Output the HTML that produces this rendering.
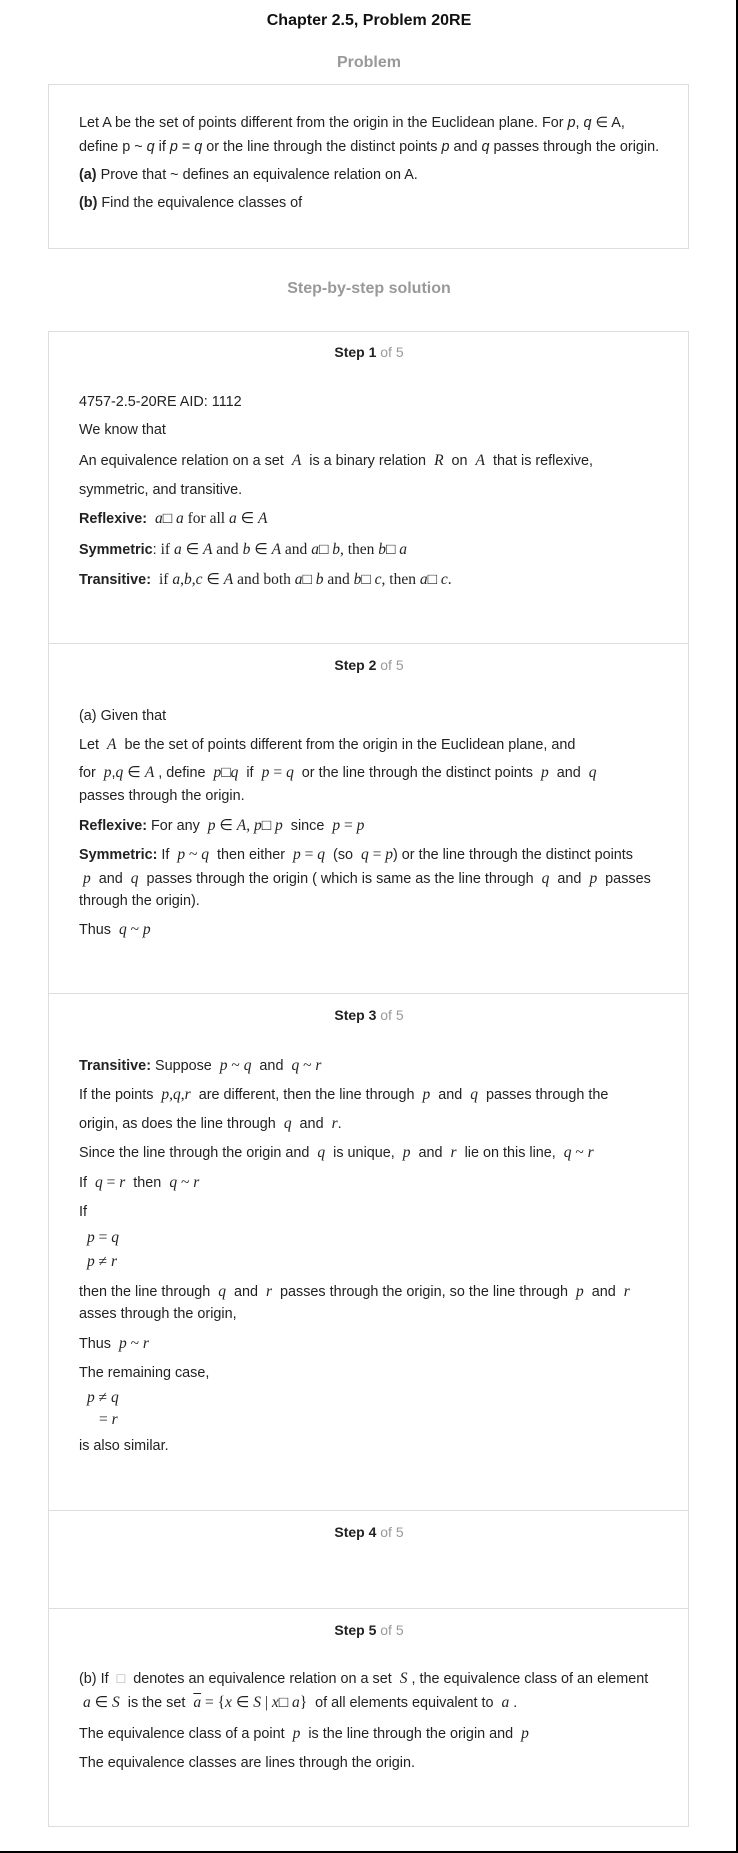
<!DOCTYPE html>
<html><head><meta charset="utf-8"><style>
*{margin:0;padding:0;box-sizing:border-box}
body{width:738px;height:1853px;background:#fff;font-family:"Liberation Sans",sans-serif;color:#222;position:relative;overflow:hidden;border-right:2px solid #000;border-bottom:2px solid #000}
.t{position:absolute;left:79px;font-size:14.4px;white-space:nowrap;line-height:16px;transform:translateY(-8px)}
.c{position:absolute;left:0;width:738px;text-align:center;white-space:nowrap;font-weight:bold;transform:translateY(-9px);line-height:18px}
.box{position:absolute;left:48px;width:641px;border:1px solid #ddd}
.hr{position:absolute;left:48px;width:641px;border-top:1px solid #ddd}
i.m{font-family:"Liberation Serif",serif;font-size:15.5px}
.r{font-family:"Liberation Serif",serif;font-size:15.5px}
b{font-weight:bold}
.g{color:#999;font-weight:normal}
</style></head><body>
<div class="c" style="top:21px;font-size:16px;color:#111">Chapter 2.5, Problem 20RE</div>
<div class="c" style="top:63px;font-size:16px;color:#999">Problem</div>
<div class="box" style="top:84px;height:165px"></div>
<div class="t" style="top:123px">Let A be the set of points different from the origin in the Euclidean plane. For <i>p</i>, <i>q</i> ∈ A,</div>
<div class="t" style="top:147px">define p ~ <i>q</i> if <i>p</i> = <i>q</i> or the line through the distinct points <i>p</i> and <i>q</i> passes through the origin.</div>
<div class="t" style="top:175px"><b>(a)</b> Prove that ~ defines an equivalence relation on A.</div>
<div class="t" style="top:203px"><b>(b)</b> Find the equivalence classes of</div>
<div class="c" style="top:289px;font-size:16px;color:#999">Step-by-step solution</div>
<div class="box" style="top:331px;height:1496px"></div>
<div class="hr" style="top:643px"></div>
<div class="hr" style="top:993px"></div>
<div class="hr" style="top:1510px"></div>
<div class="hr" style="top:1608px"></div>

<div class="c" style="top:352px;font-size:14px">Step 1 <span class="g">of 5</span></div>
<div class="t" style="top:402px">4757-2.5-20RE AID: 1112</div>
<div class="t" style="top:430px">We know that</div>
<div class="t" style="top:461px">An equivalence relation on a set &nbsp;<i class="m">A</i>&nbsp; is a binary relation &nbsp;<i class="m">R</i>&nbsp; on &nbsp;<i class="m">A</i>&nbsp; that is reflexive,</div>
<div class="t" style="top:490px">symmetric, and transitive.</div>
<div class="t" style="top:519px"><b>Reflexive:</b> &nbsp;<span class="r"><i>a</i>□ <i>a</i> for all <i>a</i> ∈ <i>A</i></span></div>
<div class="t" style="top:550px"><b>Symmetric</b>: <span class="r">if <i>a</i> ∈ <i>A</i> and <i>b</i> ∈ <i>A</i> and <i>a</i>□ <i>b</i>, then <i>b</i>□ <i>a</i></span></div>
<div class="t" style="top:580px"><b>Transitive:</b> &nbsp;<span class="r">if <i>a</i>,<i>b</i>,<i>c</i> ∈ <i>A</i> and both <i>a</i>□ <i>b</i> and <i>b</i>□ <i>c</i>, then <i>a</i>□ <i>c</i>.</span></div>

<div class="c" style="top:665px;font-size:14px">Step 2 <span class="g">of 5</span></div>
<div class="t" style="top:716px">(a) Given that</div>
<div class="t" style="top:745px">Let &nbsp;<i class="m">A</i>&nbsp; be the set of points different from the origin in the Euclidean plane, and</div>
<div class="t" style="top:773px">for &nbsp;<i class="m">p</i>,<i class="m">q</i> <span class="r">∈</span> <i class="m">A</i> , define &nbsp;<i class="m">p</i><span class="r">□</span><i class="m">q</i>&nbsp; if &nbsp;<i class="m">p</i> <span class="r">=</span> <i class="m">q</i>&nbsp; or the line through the distinct points &nbsp;<i class="m">p</i>&nbsp; and &nbsp;<i class="m">q</i></div>
<div class="t" style="top:796px">passes through the origin.</div>
<div class="t" style="top:826px"><b>Reflexive:</b> For any &nbsp;<span class="r"><i>p</i> ∈ <i>A</i>, <i>p</i>□ <i>p</i></span>&nbsp; since &nbsp;<span class="r"><i>p</i> = <i>p</i></span></div>
<div class="t" style="top:855px"><b>Symmetric:</b> If &nbsp;<span class="r"><i>p</i> ~ <i>q</i></span>&nbsp; then either &nbsp;<span class="r"><i>p</i> = <i>q</i></span>&nbsp; (so &nbsp;<span class="r"><i>q</i> = <i>p</i></span>) or the line through the distinct points</div>
<div class="t" style="top:879px">&nbsp;<i class="m">p</i>&nbsp; and &nbsp;<i class="m">q</i>&nbsp; passes through the origin ( which is same as the line through &nbsp;<i class="m">q</i>&nbsp; and &nbsp;<i class="m">p</i>&nbsp; passes</div>
<div class="t" style="top:901px">through the origin).</div>
<div class="t" style="top:930px">Thus &nbsp;<span class="r"><i>q</i> ~ <i>p</i></span></div>

<div class="c" style="top:1015px;font-size:14px">Step 3 <span class="g">of 5</span></div>
<div class="t" style="top:1066px"><b>Transitive:</b> Suppose &nbsp;<span class="r"><i>p</i> ~ <i>q</i></span>&nbsp; and &nbsp;<span class="r"><i>q</i> ~ <i>r</i></span></div>
<div class="t" style="top:1095px">If the points &nbsp;<span class="r"><i>p</i>,<i>q</i>,<i>r</i></span>&nbsp; are different, then the line through &nbsp;<i class="m">p</i>&nbsp; and &nbsp;<i class="m">q</i>&nbsp; passes through the</div>
<div class="t" style="top:1124px">origin, as does the line through &nbsp;<i class="m">q</i>&nbsp; and &nbsp;<i class="m">r</i>.</div>
<div class="t" style="top:1153px">Since the line through the origin and &nbsp;<i class="m">q</i>&nbsp; is unique, &nbsp;<i class="m">p</i>&nbsp; and &nbsp;<i class="m">r</i>&nbsp; lie on this line, &nbsp;<span class="r"><i>q</i> ~ <i>r</i></span></div>
<div class="t" style="top:1183px">If &nbsp;<span class="r"><i>q</i> = <i>r</i></span>&nbsp; then &nbsp;<span class="r"><i>q</i> ~ <i>r</i></span></div>
<div class="t" style="top:1212px">If</div>
<div class="t" style="top:1238px">&nbsp;&nbsp;<span class="r"><i>p</i> = <i>q</i></span></div>
<div class="t" style="top:1262px">&nbsp;&nbsp;<span class="r"><i>p</i> ≠ <i>r</i></span></div>
<div class="t" style="top:1292px">then the line through &nbsp;<i class="m">q</i>&nbsp; and &nbsp;<i class="m">r</i>&nbsp; passes through the origin, so the line through &nbsp;<i class="m">p</i>&nbsp; and &nbsp;<i class="m">r</i></div>
<div class="t" style="top:1314px">asses through the origin,</div>
<div class="t" style="top:1344px">Thus &nbsp;<span class="r"><i>p</i> ~ <i>r</i></span></div>
<div class="t" style="top:1373px">The remaining case,</div>
<div class="t" style="top:1398px">&nbsp;&nbsp;<span class="r"><i>p</i> ≠ <i>q</i></span></div>
<div class="t" style="top:1420px">&nbsp;&nbsp;&nbsp;&nbsp;&nbsp;<span class="r">= <i>r</i></span></div>
<div class="t" style="top:1446px">is also similar.</div>

<div class="c" style="top:1532px;font-size:14px">Step 4 <span class="g">of 5</span></div>

<div class="c" style="top:1630px;font-size:14px">Step 5 <span class="g">of 5</span></div>
<div class="t" style="top:1679px">(b) If &nbsp;<span style="color:#aaa">□</span>&nbsp; denotes an equivalence relation on a set &nbsp;<i class="m">S</i> , the equivalence class of an element</div>
<div class="t" style="top:1703px">&nbsp;<span class="r"><i>a</i> ∈ <i>S</i></span>&nbsp; is the set &nbsp;<span class="r"><i style="text-decoration:overline">a</i> = {<i>x</i> ∈ <i>S</i> | <i>x</i>□ <i>a</i>}</span>&nbsp; of all elements equivalent to &nbsp;<i class="m">a</i> .</div>
<div class="t" style="top:1734px">The equivalence class of a point &nbsp;<i class="m">p</i>&nbsp; is the line through the origin and &nbsp;<i class="m">p</i></div>
<div class="t" style="top:1763px">The equivalence classes are lines through the origin.</div>
</body></html>
